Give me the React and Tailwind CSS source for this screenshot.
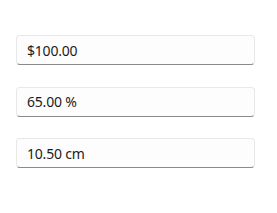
export default function App() {
  const values = ["$100.00", "65.00 %", "10.50 cm"];
  return (
    <div className="w-[277px] h-[213px] bg-white pt-[35px] pl-[16px]" style={{ fontFamily: '"Segoe UI", "Noto Sans", "Open Sans", sans-serif' }}>
      <div className="flex flex-col gap-[21.5px]">
        {values.map((v) => (
          <div
            key={v}
            className="w-[239px] h-[30px] rounded-[4px] border border-[#e8e8e8] border-b-[#8a8a8a] bg-[#fdfdfd] flex items-center pl-[10px] text-[14px] tracking-[-0.2px] text-[#1b1b1b]"
          >
            {v}
          </div>
        ))}
      </div>
    </div>
  );
}
